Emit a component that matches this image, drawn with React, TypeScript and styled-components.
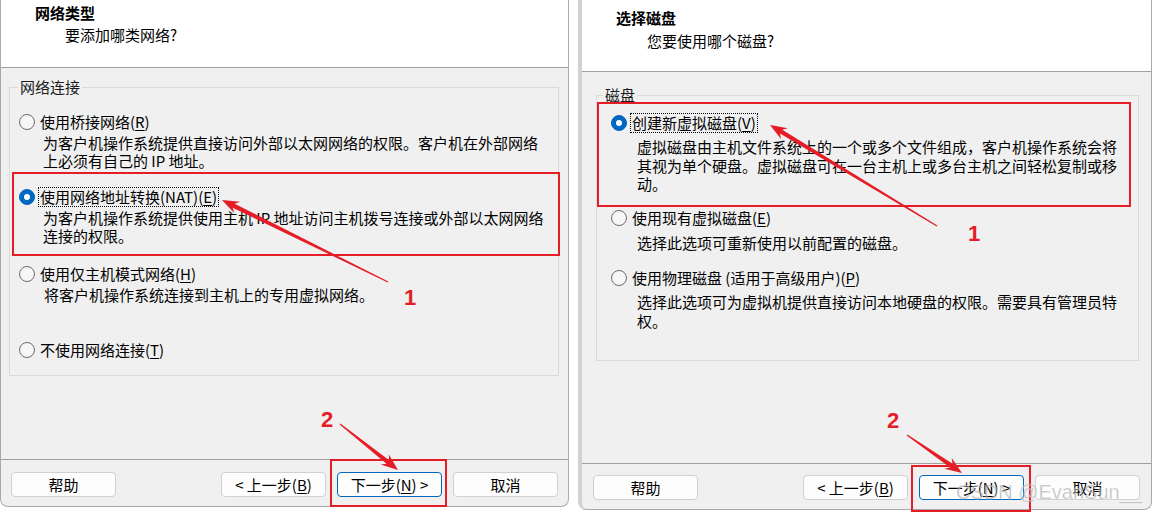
import React from "react";
import styled, { createGlobalStyle } from "styled-components";

const GlobalStyle = createGlobalStyle`
  html, body { margin: 0; padding: 0; background: #ffffff; }
  body {
    font-family: "Noto Sans CJK SC", "Noto Sans", sans-serif;
    font-size: 15px;
    color: #000;
  }
  * { box-sizing: border-box; }
`;

const Page = styled.div`
  position: relative;
  width: 1152px;
  height: 512px;
  display: flex;
  align-items: flex-start;
  gap: 9px;
  background: #fff;
  overflow: hidden;
`;

const Panel = styled.div<{ $w: number; $h: number; $edge?: boolean }>`
  width: ${(p) => p.$w}px;
  height: ${(p) => p.$h}px;
  flex: none;
  display: flex;
  flex-direction: column;
  background: #f0f0f0;
  border: 1px solid #a9a9a9;
  border-top: none;
  border-left: ${(p) => (p.$edge ? "4px solid #d2d2d2" : "1px solid #a9a9a9")};
  border-radius: 0 0 8px 8px;
  overflow: hidden;
`;

const Header = styled.div<{ $h: number; $pt: number }>`
  flex: none;
  height: ${(p) => p.$h}px;
  background: #fff;
  border-bottom: 1px solid #a0a0a0;
  padding: ${(p) => p.$pt}px 0 0 34px;
`;

const Title = styled.div`
  font-weight: 700;
  font-size: 15px;
  line-height: 20px;
`;

const Subtitle = styled.div<{ $mt: number; $ml: number }>`
  margin: ${(p) => p.$mt}px 0 0 ${(p) => p.$ml}px;
  line-height: 20px;
`;

const Body = styled.div<{ $pt: number }>`
  flex: 1;
  padding-top: ${(p) => p.$pt}px;
`;

const Group = styled.fieldset<{ $h: number; $ml: number; $mr: number }>`
  margin: 0 ${(p) => p.$mr}px 0 ${(p) => p.$ml}px;
  padding: 0;
  min-width: 0;
  height: ${(p) => p.$h}px;
  border: 1px solid #dadada;
`;

const Legend = styled.legend<{ $ml: number }>`
  margin-left: ${(p) => p.$ml}px;
  padding: 0 2px;
  line-height: 18px;
  font-size: 15px;
  color: #1a1a1a;
`;

const Option = styled.div<{ $mt: number }>`
  margin-top: ${(p) => p.$mt}px;
`;

const Row = styled.div<{ $pl: number }>`
  display: flex;
  align-items: center;
  gap: 3px;
  height: 20px;
  padding-left: ${(p) => p.$pl}px;
`;

const Radio = styled.span<{ $on?: boolean }>`
  flex: none;
  width: 16px;
  height: 16px;
  border-radius: 50%;
  display: flex;
  align-items: center;
  justify-content: center;
  background: ${(p) => (p.$on ? "#0067c0" : "#f6f6f6")};
  border: 1px solid ${(p) => (p.$on ? "#0067c0" : "#6c6c6c")};
`;

const Dot = styled.span`
  width: 6px;
  height: 6px;
  border-radius: 50%;
  background: #fff;
`;

const Label = styled.span<{ $focus?: boolean }>`
  padding: 0 1px;
  border: 1px dotted ${(p) => (p.$focus ? "#000" : "transparent")};
  line-height: 18px;
  white-space: nowrap;
`;

const U = styled.span`
  text-decoration: underline;
  text-underline-offset: 2px;
`;

const Desc = styled.div<{ $pl: number; $mt: number; $lh: number }>`
  padding-left: ${(p) => p.$pl}px;
  margin-top: ${(p) => p.$mt}px;
  line-height: ${(p) => p.$lh}px;
  white-space: nowrap;
`;

const Footer = styled.div<{ $h: number; $pt: number; $px: number }>`
  flex: none;
  height: ${(p) => p.$h}px;
  border-top: 1px solid #a0a0a0;
  padding: ${(p) => p.$pt}px ${(p) => p.$px}px 0;
  display: flex;
  justify-content: space-between;
  align-items: flex-start;
`;

const ButtonGroup = styled.div<{ $gap: number }>`
  display: flex;
  gap: ${(p) => p.$gap}px;
`;

const Button = styled.button<{ $primary?: boolean }>`
  width: 105px;
  height: 25px;
  padding: 0;
  margin: 0;
  background: #fdfdfd;
  border: 1px solid ${(p) => (p.$primary ? "#0067c0" : "#d0d0d0")};
  border-radius: 4px;
  font-family: inherit;
  font-size: 15px;
  line-height: 22px;
  color: #000;
`;

const Overlay = styled.svg`
  position: absolute;
  left: 0;
  top: 0;
  pointer-events: none;
`;

const RED = "#e51d27";

function Arrow({ x1, y1, x2, y2 }: { x1: number; y1: number; x2: number; y2: number }) {
  const dx = x2 - x1;
  const dy = y2 - y1;
  const len = Math.hypot(dx, dy);
  const ux = dx / len;
  const uy = dy / len;
  const nx = -uy;
  const ny = ux;
  const headLen = 17;
  const bx = x2 - ux * headLen;
  const by = y2 - uy * headLen;
  const nbx = x2 - ux * (headLen - 4);
  const nby = y2 - uy * (headLen - 4);
  const pts: [number, number][] = [
    [x1 + nx * 0.6, y1 + ny * 0.6],
    [nbx + nx * 2.2, nby + ny * 2.2],
    [bx + nx * 6.5, by + ny * 6.5],
    [x2, y2],
    [bx - nx * 6.5, by - ny * 6.5],
    [nbx - nx * 2.2, nby - ny * 2.2],
    [x1 - nx * 0.6, y1 - ny * 0.6],
  ];
  return <polygon points={pts.map((p) => p.join(",")).join(" ")} fill={RED} />;
}

export default function App() {
  return (
    <>
      <GlobalStyle />
      <Page>
        <Panel $w={569} $h={507}>
          <Header $h={68} $pt={3}>
            <Title>网络类型</Title>
            <Subtitle $mt={2} $ml={30}>要添加哪类网络?</Subtitle>
          </Header>
          <Body $pt={10}>
            <Group $h={298} $ml={8} $mr={9}>
              <Legend $ml={8}>网络连接</Legend>
              <Option $mt={16}>
                <Row $pl={9}>
                  <Radio />
                  <Label>使用桥接网络(<U>R</U>)</Label>
                </Row>
                <Desc $pl={33} $mt={2} $lh={18}>
                  为客户机操作系统提供直接访问外部以太网网络的权限。客户机在外部网络
                  <br />
                  上必须有自己的 IP 地址。
                </Desc>
              </Option>
              <Option $mt={17}>
                <Row $pl={9}>
                  <Radio $on>
                    <Dot />
                  </Radio>
                  <Label $focus>使用网络地址转换(NAT)(<U>E</U>)</Label>
                </Row>
                <Desc $pl={33} $mt={2} $lh={18}>
                  为客户机操作系统提供使用主机 IP 地址访问主机拨号连接或外部以太网网络
                  <br />
                  连接的权限。
                </Desc>
              </Option>
              <Option $mt={19}>
                <Row $pl={9}>
                  <Radio />
                  <Label>使用仅主机模式网络(<U>H</U>)</Label>
                </Row>
                <Desc $pl={34} $mt={2} $lh={18}>
                  将客户机操作系统连接到主机上的专用虚拟网络。
                </Desc>
              </Option>
              <Option $mt={36}>
                <Row $pl={9}>
                  <Radio />
                  <Label>不使用网络连接(<U>T</U>)</Label>
                </Row>
              </Option>
            </Group>
          </Body>
          <Footer $h={47} $pt={12} $px={10}>
            <Button>帮助</Button>
            <ButtonGroup $gap={11}>
              <Button>&lt; 上一步(<U>B</U>)</Button>
              <Button $primary>下一步(<U>N</U>) &gt;</Button>
              <Button>取消</Button>
            </ButtonGroup>
          </Footer>
        </Panel>

        <Panel $w={574} $h={510} $edge>
          <Header $h={72} $pt={8}>
            <Title>选择磁盘</Title>
            <Subtitle $mt={3} $ml={31}>您要使用哪个磁盘?</Subtitle>
          </Header>
          <Body $pt={14}>
            <Group $h={275} $ml={14} $mr={12}>
              <Legend $ml={6}>磁盘</Legend>
              <Option $mt={9}>
                <Row $pl={14}>
                  <Radio $on>
                    <Dot />
                  </Radio>
                  <Label $focus>创建新虚拟磁盘(<U>V</U>)</Label>
                </Row>
                <Desc $pl={40} $mt={5} $lh={18.5}>
                  虚拟磁盘由主机文件系统上的一个或多个文件组成，客户机操作系统会将
                  <br />
                  其视为单个硬盘。虚拟磁盘可在一台主机上或多台主机之间轻松复制或移
                  <br />
                  动。
                </Desc>
              </Option>
              <Option $mt={14.5}>
                <Row $pl={14}>
                  <Radio />
                  <Label>使用现有虚拟磁盘(<U>E</U>)</Label>
                </Row>
                <Desc $pl={40} $mt={5.5} $lh={18.5}>
                  选择此选项可重新使用以前配置的磁盘。
                </Desc>
              </Option>
              <Option $mt={15.5}>
                <Row $pl={14}>
                  <Radio />
                  <Label>使用物理磁盘 (适用于高级用户)(<U>P</U>)</Label>
                </Row>
                <Desc $pl={40} $mt={5.5} $lh={18.5}>
                  选择此选项可为虚拟机提供直接访问本地硬盘的权限。需要具有管理员特
                  <br />
                  权。
                </Desc>
              </Option>
            </Group>
          </Body>
          <Footer $h={46} $pt={11} $px={11}>
            <Button>帮助</Button>
            <ButtonGroup $gap={11}>
              <Button>&lt; 上一步(<U>B</U>)</Button>
              <Button $primary>下一步(<U>N</U>) &gt;</Button>
              <Button>取消</Button>
            </ButtonGroup>
          </Footer>
        </Panel>

        <Overlay width={1152} height={512} viewBox="0 0 1152 512">
          <rect x={13} y={173} width={546} height={82} fill="none" stroke={RED} strokeWidth={2} />
          <rect x={331} y={460} width={115} height={46} fill="none" stroke={RED} strokeWidth={2} />
          <rect x={598} y={103} width={532} height={103} fill="none" stroke={RED} strokeWidth={2} />
          <rect x={912} y={466} width={118} height={45} fill="none" stroke={RED} strokeWidth={2} />
          <Arrow x1={388} y1={282} x2={222} y2={200} />
          <Arrow x1={340} y1={424} x2={398} y2={470} />
          <Arrow x1={937} y1={226} x2={770} y2={125} />
          <Arrow x1={907} y1={435} x2={962} y2={473} />
          <g fill={RED} fontFamily="'Liberation Sans', Arial, sans-serif" fontWeight={700} fontSize={22} textAnchor="middle">
            <text x={410} y={305}>1</text>
            <text x={327} y={427}>2</text>
            <text x={974} y={241}>1</text>
            <text x={893} y={428}>2</text>
          </g>
          <text
            x={956}
            y={499}
            fontFamily="'Liberation Sans', Arial, sans-serif"
            fontSize={20}
            fill="rgba(140,140,140,0.55)"
            stroke="rgba(255,255,255,0.5)"
            strokeWidth={0.6}
          >
            CSDN @EvanSun__
          </text>
        </Overlay>
      </Page>
    </>
  );
}
